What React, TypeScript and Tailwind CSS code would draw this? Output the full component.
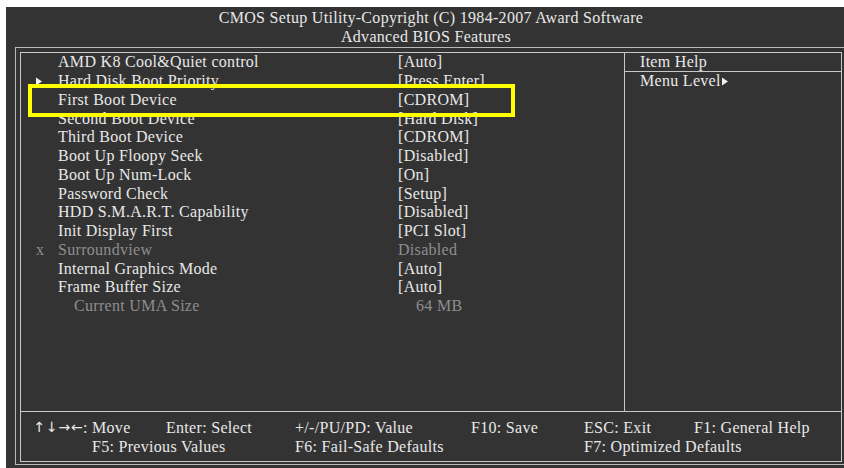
import React from "react";

const rows: { label: string; value: string; mark?: "arrow" | "x"; dim?: boolean; indent?: boolean }[] = [
  { label: "AMD K8 Cool&Quiet control", value: "[Auto]" },
  { label: "Hard Disk Boot Priority", value: "[Press Enter]", mark: "arrow" },
  { label: "First Boot Device", value: "[CDROM]" },
  { label: "Second Boot Device", value: "[Hard Disk]" },
  { label: "Third Boot Device", value: "[CDROM]" },
  { label: "Boot Up Floopy Seek", value: "[Disabled]" },
  { label: "Boot Up Num-Lock", value: "[On]" },
  { label: "Password Check", value: "[Setup]" },
  { label: "HDD S.M.A.R.T. Capability", value: "[Disabled]" },
  { label: "Init Display First", value: "[PCI Slot]" },
  { label: "Surroundview", value: "Disabled", mark: "x", dim: true },
  { label: "Internal Graphics Mode", value: "[Auto]" },
  { label: "Frame Buffer Size", value: "[Auto]" },
  { label: "Current UMA Size", value: "64 MB", dim: true, indent: true },
];

function Tri({ className = "" }: { className?: string }) {
  return (
    <svg width="6" height="9" viewBox="0 0 6 9" className={className}>
      <polygon points="0,0.5 6,4.5 0,8.5" fill="#f0f0f0" />
    </svg>
  );
}

const arrows = ["↑", "↓", "→", "←"];

export default function App() {
  return (
    <div
      className="w-[844px] h-[468px] bg-white overflow-hidden text-[#e8e8e8] text-[16px] tracking-[0.3px]"
      style={{ fontFamily: '"Liberation Serif", "Times New Roman", serif' }}
    >
      <div className="ml-[6px] mt-[7px] w-[848px] h-[461px] bg-[#333333]">
        <div className="h-[40px] flex flex-col items-center leading-[19px] pt-[1px]">
          <div className="pl-[2px]">CMOS Setup Utility-Copyright (C) 1984-2007 Award Software</div>
          <div className="pr-[8px]">Advanced BIOS Features</div>
        </div>
        <div className="ml-[9px] w-[836px] h-[418px] border border-[#b8b8b8] pt-[4px] pl-[4px] pr-[3px] pb-[2px]">
          <div className="w-[822px] h-[410px] border border-[#c8c8c8] flex flex-col">
            <div className="flex h-[359px] border-b border-[#c8c8c8]">
              <div className="relative w-[604px] border-r border-[#c8c8c8]">
                {rows.map((r) => (
                  <div
                    key={r.label}
                    className={`flex h-[18.75px] items-center leading-[18px] ${r.dim ? "text-[#8e8e8e]" : ""}`}
                  >
                    <div className="w-[37px] pl-[15px] flex items-center">
                      {r.mark === "arrow" && <Tri />}
                      {r.mark === "x" && <span>x</span>}
                    </div>
                    <div className={`w-[340px] ${r.indent ? "pl-[16px]" : ""}`}>{r.label}</div>
                    <div className={r.indent ? "pl-[18px]" : ""}>{r.value}</div>
                  </div>
                ))}
                <div className="absolute left-[7px] top-[31px] w-[487px] h-[33px] border-[4px] border-[#ffff00]" />
              </div>
              <div className="flex-1 flex flex-col">
                <div className="h-[19px] border-b border-[#c8c8c8] pl-[15px] leading-[18px]">Item Help</div>
                <div className="pl-[15px] leading-[18px] flex items-center">
                  Menu Level
                  <Tri className="ml-[1px]" />
                </div>
              </div>
            </div>
            <div className="flex-1 pt-[6px] pl-[12px] leading-[19px] whitespace-nowrap">
              <div className="flex">
                <div className="w-[133px] flex">
                  {arrows.map((a) => (
                    <span
                      key={a}
                      className="inline-block w-[12.5px] text-center text-[14px] tracking-[0px]"
                      style={{ fontFamily: '"DejaVu Sans", sans-serif' }}
                    >
                      {a}
                    </span>
                  ))}
                  <span>: Move</span>
                </div>
                <div className="w-[129px]">Enter: Select</div>
                <div className="w-[176px]">+/-/PU/PD: Value</div>
                <div className="w-[113px]">F10: Save</div>
                <div className="w-[110px]">ESC: Exit</div>
                <div>F1: General Help</div>
              </div>
              <div className="flex">
                <div className="w-[262px] pl-[59px]">F5: Previous Values</div>
                <div className="w-[289px]">F6: Fail-Safe Defaults</div>
                <div>F7: Optimized Defaults</div>
              </div>
            </div>
          </div>
        </div>
      </div>
    </div>
  );
}
